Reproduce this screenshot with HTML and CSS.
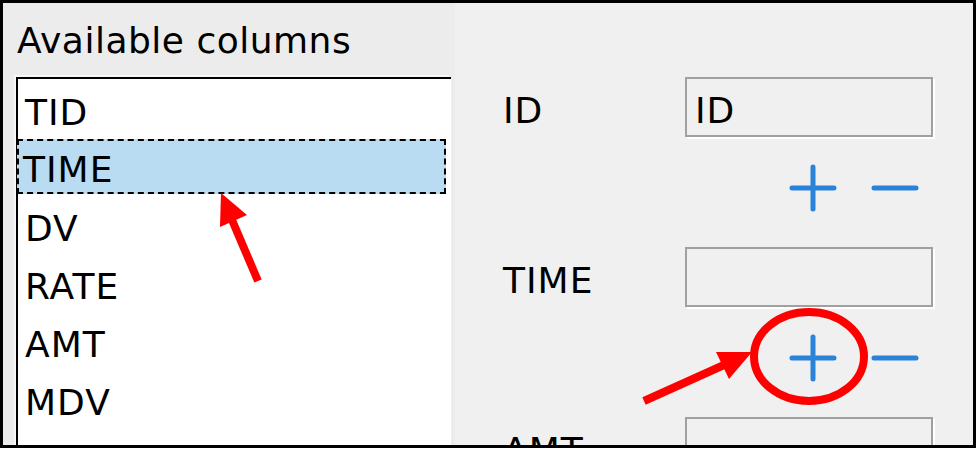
FILE: index.html
```html
<!DOCTYPE html>
<html>
<head>
<meta charset="utf-8">
<link rel="stylesheet" href="styles.css">
</head>
<body>
<div class="frame">
  <div class="left">
    <div class="title">Available columns</div>
    <div class="list">
      <div class="item">TID</div>
      <div class="item selected">TIME</div>
      <div class="item">DV</div>
      <div class="item">RATE</div>
      <div class="item">AMT</div>
      <div class="item">MDV</div>
    </div>
  </div>
  <div class="right">
    <div class="field">
      <div class="label">ID</div>
      <div class="box">ID</div>
    </div>
    <div class="buttons">
      <svg class="btn" width="48" height="48" viewBox="0 0 48 48"><path d="M3 24H45M24 3V45" stroke="#2a82d9" stroke-width="5" stroke-linecap="round" fill="none"/></svg>
      <svg class="btn" width="48" height="48" viewBox="0 0 48 48"><path d="M3 24H45" stroke="#2a82d9" stroke-width="5" stroke-linecap="round" fill="none"/></svg>
    </div>
    <div class="field">
      <div class="label">TIME</div>
      <div class="box"></div>
    </div>
    <div class="buttons">
      <svg class="btn" width="48" height="48" viewBox="0 0 48 48"><path d="M3 24H45M24 3V45" stroke="#2a82d9" stroke-width="5" stroke-linecap="round" fill="none"/></svg>
      <svg class="btn" width="48" height="48" viewBox="0 0 48 48"><path d="M3 24H45" stroke="#2a82d9" stroke-width="5" stroke-linecap="round" fill="none"/></svg>
    </div>
    <div class="field">
      <div class="label">AMT</div>
      <div class="box"></div>
    </div>
  </div>
  <svg class="annot" width="978" height="449" viewBox="0 0 978 449">
    <line x1="258" y1="281" x2="232" y2="220" stroke="#ff0000" stroke-width="8"/>
    <polygon points="221,193 247,215 220,227" fill="#ff0000"/>
    <line x1="644" y1="401" x2="724" y2="365" stroke="#ff0000" stroke-width="8"/>
    <polygon points="752,352 716,352 729,379" fill="#ff0000"/>
    <ellipse cx="809" cy="356.5" rx="55" ry="44.5" fill="none" stroke="#ff0000" stroke-width="8"/>
  </svg>
</div>
</body>
</html>
```
FILE: styles.css
```css
html, body {
  margin: 0;
  padding: 0;
  background: #ffffff;
}
.frame {
  position: relative;
  box-sizing: border-box;
  width: 976px;
  height: 448px;
  border: 3px solid #000;
  background: #ececec;
  overflow: hidden;
  display: flex;
  font-family: "DejaVu Sans", sans-serif;
  font-size: 36px;
  letter-spacing: 1px;
  color: #000;
}
.left {
  width: 452px;
  flex: none;
  padding-left: 13px;
  box-sizing: border-box;
}
.title {
  height: 70px;
  line-height: 80px;
  padding-left: 1px;
  margin-top: -2px;
  letter-spacing: 0.5px;
}
.list {
  margin-top: 6px;
  width: 435px;
  height: 400px;
  background: #fff;
  border-left: 2px solid #000;
  border-top: 2px solid #000;
  box-shadow: -2px -2px 0 #f8f8f8;
  box-sizing: border-box;
  padding-top: 2px;
}
.item {
  height: 58px;
  line-height: 64px;
  padding-left: 7px;
}
.item.selected {
  height: 55px;
  line-height: 61px;
  margin-bottom: 3px;
  margin-right: 5px;
  margin-left: -1px;
  padding-left: 6px;
  background: #b9dcf3;
  outline: 2px dashed #000;
  outline-offset: -2px;
}
.right {
  flex: 1;
  background: #f0f0f0;
  padding-top: 74px;
  padding-left: 48px;
  box-sizing: border-box;
}
.field {
  display: flex;
  align-items: flex-start;
  height: 60px;
}
.label {
  width: 182px;
  height: 60px;
  line-height: 68px;
}
.box {
  box-sizing: border-box;
  width: 248px;
  height: 60px;
  border: 2px solid #a0a0a0;
  box-shadow: 2px 2px 0 #ffffff;
  background: #f0f0f0;
  padding-left: 8px;
  line-height: 63px;
  overflow: hidden;
}
.buttons {
  height: 110px;
  display: flex;
  align-items: center;
  justify-content: flex-end;
  gap: 34px;
  width: 416px;
  padding-bottom: 8px;
  box-sizing: border-box;
}
.btn {
  display: block;
}
.annot {
  position: absolute;
  left: -3px;
  top: -3px;
}
```
